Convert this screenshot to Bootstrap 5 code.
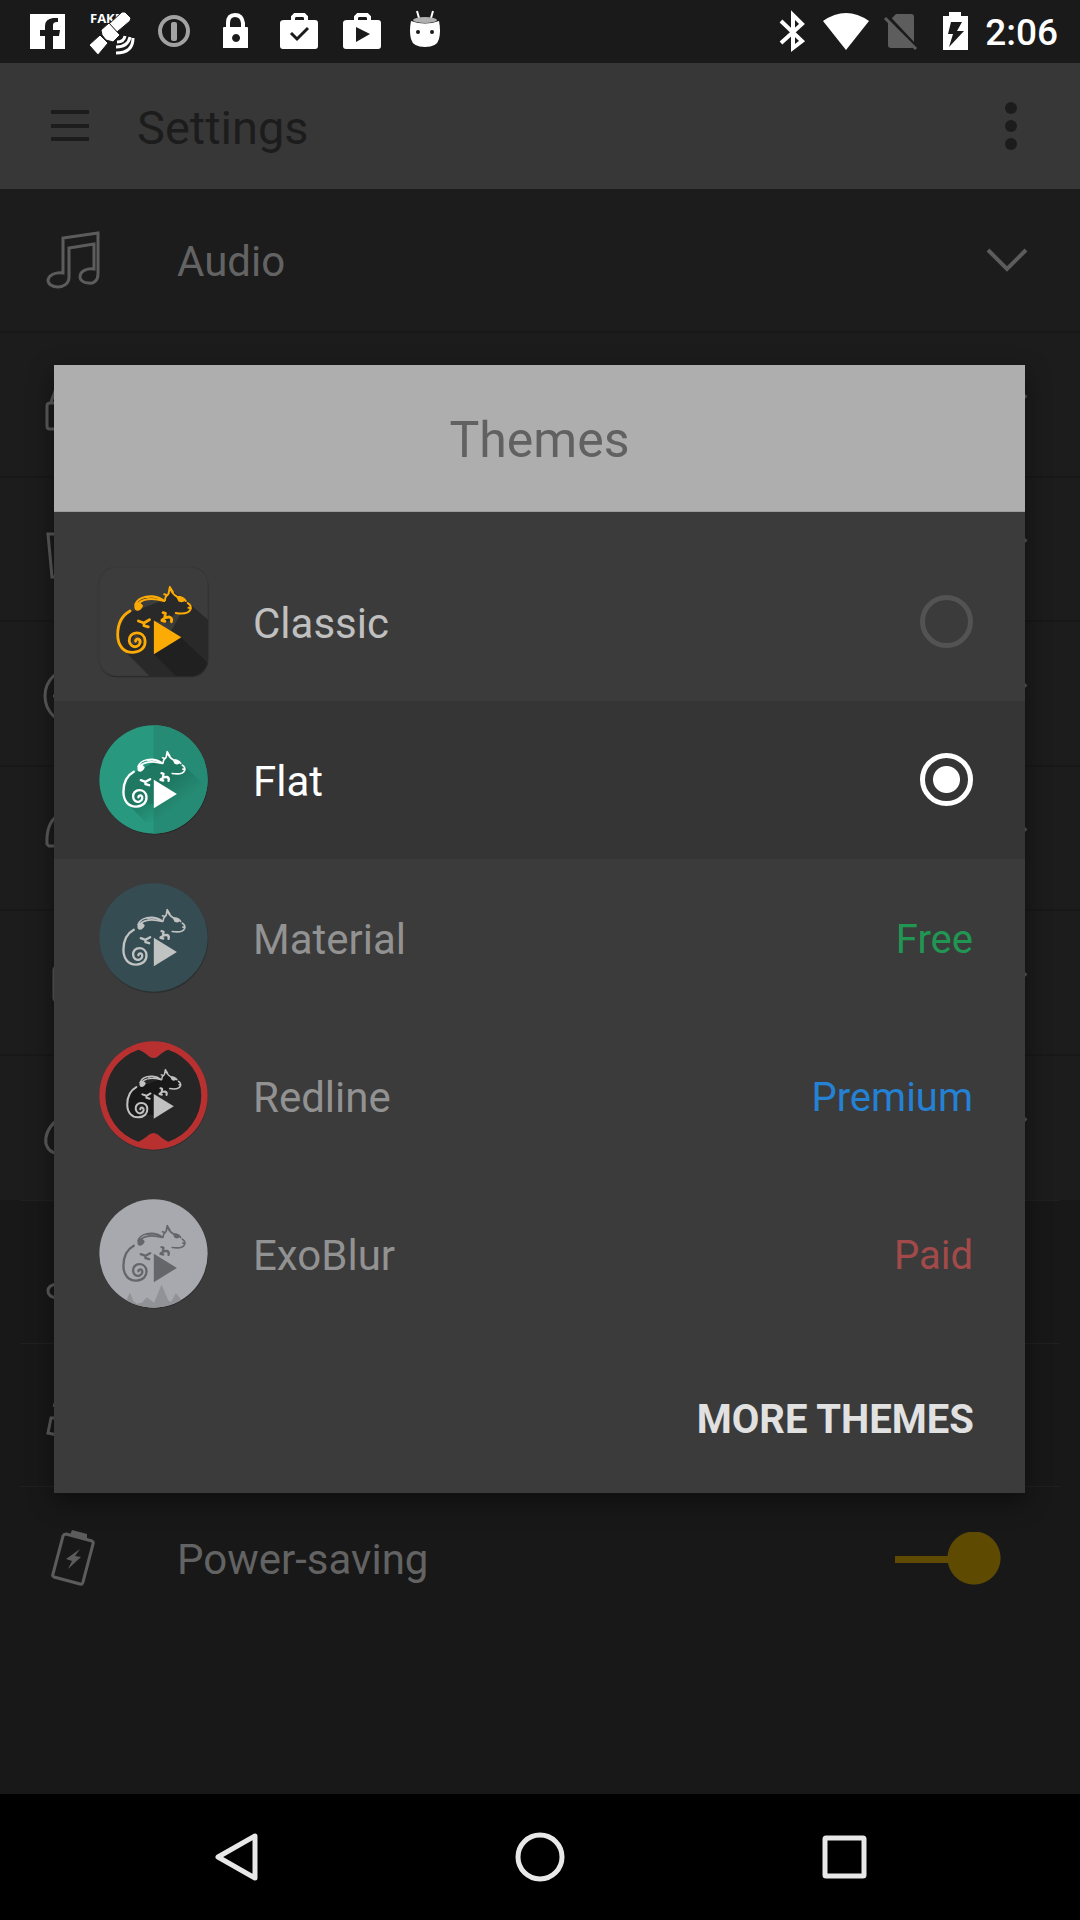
<!DOCTYPE html>
<html lang="en">
<head>
<meta charset="utf-8">
<meta name="viewport" content="width=device-width, initial-scale=1">
<title>Settings</title>
<link rel="stylesheet" href="https://cdn.jsdelivr.net/npm/bootstrap@5.3.0/dist/css/bootstrap.min.css">
<style>
  body { font-family: Roboto, "Noto Sans", sans-serif; background: #181818; color: #636363; font-size: 42px; line-height: 48px; }
  svg { display: block; flex: none; overflow: visible; }
  button { color: inherit; }
  .statusbar { height: 63px; background: #1a1a1a; color: #fff; padding: 0 22px 0 24px; }
  .status-left { gap: 15px; }
  .status-right { gap: 6px; }
  .clock { font-size: 37px; font-weight: 500; padding-top: 3px; }
  .fake-tag { font: bold 13px "Open Sans", sans-serif; }
  .appbar { height: 126px; background: #373737; color: #1c1c1c; padding: 0 60px 0 50px; }
  .appbar h1 { font-size: 47px; line-height: 56px; margin: 0 0 0 47px; padding-top: 3px; }
  .icon-btn { background: none; border: 0; padding: 0; }
  .setting { height: 144px; background: #1c1c1c; border-bottom: 2px solid #181818; padding: 0 52px 0 45px; gap: 72px; }
  .setting:nth-child(even) { height: 145px; }
  .setting span, .setting label, .theme-item span, .theme-item label { padding-top: 4px; }
  .basic .setting { height: 143px; background: none; border: 0; margin: 0 20px; padding: 0 59px 0 25px; border-top: 1px solid #202020; }
  .line-icon { width: 60px; height: 60px; fill: none; stroke: #5c5c5c; stroke-width: 3; }
  .chevron { width: 42px; height: 24px; fill: none; stroke: #5c5c5c; stroke-width: 4; }
  .power-switch { appearance: none; width: 106px; height: 53px; margin: 0;
    background: radial-gradient(circle at 79px 26px, #5e4a00 26px, transparent 27px), linear-gradient(#5e4a00, #5e4a00) 0 24px / 60px 7px no-repeat; }
  .overlay { padding: 0 55px 0 54px; }
  .dialog-box { background: #3b3b3b; box-shadow: 0 8px 24px rgba(0,0,0,.45); }
  .dialog-head { background: #aeaeae; color: #616161; border-bottom: 1px solid #9c9c9c; padding: 48px 0 44px; }
  .dialog-head h2 { font-size: 50px; line-height: 54px; margin: 0; }
  .theme-list { padding-top: 31px; }
  .theme-item { height: 158px; padding: 0 52px 0 45px; gap: 45px; color: #929292; }
  .theme-item.available { color: #c0c0c0; }
  .theme-item.selected { background: #353535; color: #fff; }
  .theme-icon { width: 109px; height: 109px; }
  .theme-radio { appearance: none; width: 53px; height: 53px; margin: 0; border: 5px solid #535353; border-radius: 50%; }
  .theme-radio:checked { border-color: #fff; background: radial-gradient(circle, #fff 13px, transparent 14px); }
  .price { font-size: 40px; }
  .price-free { color: #219653; }
  .price-premium { color: #2481d3; }
  .price-paid { color: #a24a4a; }
  .dialog-foot { padding: 63px 51px 49px; }
  .more-btn { font-size: 40px; font-weight: 700; color: #e1e1e1; line-height: 48px; }
  .navbuttons { height: 126px; background: #000; gap: 224px; }
  .navbuttons svg { width: 80px; height: 80px; fill: none; stroke: #e8e8e8; stroke-width: 5; stroke-linejoin: round; }
</style>
<script src="https://cdn.jsdelivr.net/npm/bootstrap@5.3.0/dist/js/bootstrap.bundle.min.js"></script>
</head>
<body class="min-vh-100 d-flex flex-column">

<!-- shared drawings -->
<svg width="0" height="0" class="position-absolute" aria-hidden="true">
  <defs>
    <g id="chameleon">
      <g fill="none" stroke="currentColor" stroke-linecap="round" stroke-linejoin="round">
        <path stroke-width="7" d="M104 140C82 152 73 174 73 200C73 228 89 245 112 244C132 243 143 231 142 215C141 201 131 195 121 195C109 195 101 204 102 215C103 226 112 232 121 229C130 226 132 215 126 211C122 209 117 212 118 216"/>
        <path stroke-width="5" d="M117 124C122 109 140 102 160 103C174 104 183 109 190 115M127 119C142 108 168 109 190 115"/>
        <path stroke-width="4" d="M146 106Q166 100 187 113"/>
        <path stroke-width="5" d="M192 113C191 102 197 103 201 96L204 80Q208 96 222 104Q238 104 244 115M204 80L212 93M190 98L197 100"/>
        <path stroke-width="5" d="M249 120Q259 126 256 136Q250 150 219 145M251 132L257 133"/>
        <path stroke-width="7" d="M125 165L139 170L153 162M139 170L139 177L150 180M187 144L193 146L191 158L184 163M191 157L203 155Q211 158 208 167M184 164L192 166"/>
      </g>
      <path fill="currentColor" d="M115 132C114 121 122 115 130 120L137 126C133 140 117 145 115 132ZM220 104Q232 101 243 113Q236 121 226 116Z"/>
      <path fill="currentColor" d="M164 164L233 206L164 249Z"/>
    </g>
    <path id="chameleon-body" d="M106 142L130 135L190 112L205 85L252 122L252 142L218 145L196 170L165 165L164 236L137 234L139 212L117 197L105 222L117 226L112 242C66 242 66 170 106 142Z"/>
    <linearGradient id="fade" gradientUnits="userSpaceOnUse" x1="150" y1="180" x2="210" y2="260"><stop offset="0" stop-color="#14604c" stop-opacity=".6"/><stop offset="1" stop-color="#14604c" stop-opacity="0"/></linearGradient>
    <clipPath id="tile"><rect width="326" height="326" rx="52"/></clipPath>
    <clipPath id="disc"><circle cx="163" cy="163" r="162"/></clipPath>
    <symbol id="chev" viewBox="0 0 42 24"><path d="M2 2L21 21L40 2"/></symbol>
  </defs>
</svg>

<header class="statusbar d-flex align-items-center justify-content-between">
  <div class="status-left d-flex">
    <svg width="48" height="63" fill="#fff"><path d="M6 14h35v35H29V36h6l1-6h-7v-5q0-3 4-3h1v-4h-5q-8 1-8 8v4h-5v6h5v13H6z"/></svg>
    <svg width="48" height="63" fill="#fff"><text class="fake-tag" x="3" y="23">FAKE</text><g stroke="#1a1a1a" stroke-width="1"><path d="M35 12l3 0 6 6-1 3-13 11-8-8z"/><path d="M14 30l8-7 11 12-7 7-7-2-4-5z"/><path d="M13 35l8 8-10 12-9-10z"/></g><g fill="none" stroke="#fff" stroke-width="3"><path d="M30 42q7 0 8-6M29 47q12 0 14-10M29 53q17 0 17-15"/></g></svg>
    <svg width="48" height="63"><circle cx="24" cy="31" r="14" fill="none" stroke="#a2a2a2" stroke-width="4"/><rect x="21" y="22" width="6" height="19" rx="2" fill="#a2a2a2"/></svg>
    <svg width="48" height="63"><path d="M15 28v-5q0-8 7-8t8 8v5" fill="none" stroke="#fff" stroke-width="4"/><path fill="#fff" fill-rule="evenodd" d="M11 27h23q1 0 1 1v20H10V28q0-1 1-1zm12 7a4 4 0 1 0 .1 0z"/></svg>
    <svg width="48" height="63"><path fill="#fff" d="M8 20h31q3 0 3 3v23q0 3-3 3H7q-3 0-3-3V23q0-3 4-3z"/><path d="M17 21v-4l2-2h9l2 2v4" fill="none" stroke="#fff" stroke-width="4"/><path d="M15 33l6 6 11-11" fill="none" stroke="#1a1a1a" stroke-width="3"/></svg>
    <svg width="48" height="63"><path fill="#fff" d="M8 20h31q3 0 3 3v23q0 3-3 3H7q-3 0-3-3V23q0-3 4-3z"/><path d="M17 21v-4l2-2h9l2 2v4" fill="none" stroke="#fff" stroke-width="4"/><path fill="#1a1a1a" d="M17 27l14 7-14 8z"/></svg>
    <svg width="48" height="63"><path d="M15 11l2 7M31 11l-2 7" stroke="#fff" stroke-width="2"/><path fill="#fff" d="M9 21q14 5 28 0 2 10 0 18-2 8-14 8T9 39q-2-8 0-18z"/><ellipse cx="23" cy="20" rx="12" ry="3" fill="#b0b0b0"/><circle cx="16" cy="32" r="2" fill="#1a1a1a"/><circle cx="30" cy="32" r="2" fill="#1a1a1a"/></svg>
  </div>
  <div class="status-right d-flex align-items-center">
    <svg width="48" height="63" fill="none" stroke="#fff" stroke-width="4"><path d="M12 21l21 20-9 7V15l9 9-21 19"/></svg>
    <svg width="48" height="63" fill="#fff"><path d="M0 21Q23 5 46 21L23 50z"/></svg>
    <svg width="48" height="63"><path fill="#5d5d5d" d="M19 14h15q3 0 3 3v28q0 3-3 3H14q-3 0-3-3V22z"/><path d="M11 17l30 32" stroke="#1a1a1a" stroke-width="4"/><path d="M8 18l31 31" stroke="#5d5d5d" stroke-width="3"/></svg>
    <svg width="48" height="63"><path fill="#fff" d="M12 16h6v-4h12v4h7v34H12z"/><path fill="#1a1a1a" d="M20 22h11l-5 9h7L18 47l4-13h-5z"/></svg>
    <time class="clock">2:06</time>
  </div>
</header>

<div class="position-relative flex-grow-1">
  <nav class="appbar d-flex align-items-center">
    <button class="icon-btn" type="button"><svg width="40" height="40" stroke="#1c1c1c" stroke-width="4"><path d="M1 6h38M1 20h38M1 33h38"/></svg></button>
    <h1 class="fw-normal">Settings</h1>
    <button class="icon-btn ms-auto" type="button"><svg width="18" height="54" fill="#1c1c1c"><circle cx="9" cy="9" r="6"/><circle cx="9" cy="27" r="6"/><circle cx="9" cy="45" r="6"/></svg></button>
  </nav>

  <main>
    <div class="expandable">
      <div class="setting d-flex align-items-center">
        <svg class="line-icon" stroke-width="2"><path d="M18 43V8L53 3V44C53 51 48 54 44 53C38 53 35 50 35 47C35 41 42 38 49 39V14L24 18V47C24 54 18 57 13 57C7 57 3 54 3 50C4 45 10 42 18 43Z"/></svg>
        <span>Audio</span><svg class="chevron ms-auto"><use href="#chev"/></svg>
      </div>
      <div class="setting d-flex align-items-center"><svg class="line-icon"><path d="M12 54H5q-3 0-3-3V31q0-3 3-3h7M6 27l6-16"/></svg><svg class="chevron ms-auto"><use href="#chev"/></svg></div>
      <div class="setting d-flex align-items-center"><svg class="line-icon"><path d="M12 15H3L7 58h6"/></svg><svg class="chevron ms-auto"><use href="#chev"/></svg></div>
      <div class="setting d-flex align-items-center"><svg class="line-icon"><circle cx="28" cy="32" r="28"/><path d="M8 32h12"/></svg><svg class="chevron ms-auto"><use href="#chev"/></svg></div>
      <div class="setting d-flex align-items-center"><svg class="line-icon"><path d="M12 8Q1 16 2 36l2 2h8"/></svg><svg class="chevron ms-auto"><use href="#chev"/></svg></div>
      <div class="setting d-flex align-items-center"><svg class="line-icon"><rect x="9" y="14" width="30" height="34" rx="3"/></svg><svg class="chevron ms-auto"><use href="#chev"/></svg></div>
      <div class="setting d-flex align-items-center border-0"><svg class="line-icon"><path d="M12 22Q-1 33 1 46q3 9 11 9M9 47h3"/></svg><svg class="chevron ms-auto"><use href="#chev"/></svg></div>
    </div>
    <div class="basic">
      <div class="setting d-flex align-items-center"><svg class="line-icon"><path d="M12 42q-9 1-9 7t9 7"/></svg></div>
      <div class="setting d-flex align-items-center"><svg class="line-icon"><path d="M12 33H6L3 48l9 2M12 12l-3 10"/></svg></div>
      <div class="setting d-flex align-items-center">
        <svg class="line-icon"><path d="M21 6L47 13q2 1 1 3L38 54q-1 3-3 2L9 49q-2-1-1-3L18 8q1-2 3-2Z"/><path fill="#5c5c5c" stroke="none" d="M27 2l15 4v6l-17-5zM35 21L21 31l6 2-4 8 13-12-6-1z"/></svg>
        <label for="power">Power-saving</label>
        <input class="power-switch ms-auto" type="checkbox" role="switch" id="power" checked>
      </div>
    </div>
  </main>

  <div class="overlay position-absolute top-0 start-0 w-100 h-100 d-flex align-items-center">
    <section class="dialog-box w-100" role="dialog" aria-labelledby="themes-title">
      <div class="dialog-head text-center"><h2 class="fw-normal" id="themes-title">Themes</h2></div>
      <div class="theme-list">
        <div class="theme-item available d-flex align-items-center">
          <svg class="theme-icon" viewBox="0 0 326 326">
            <rect x="1" y="4" width="326" height="326" rx="52" fill="#292929"/><rect x="-1" y="-1" width="328" height="328" rx="52" fill="#343434"/><rect x="1" y="1" width="324" height="324" rx="51" fill="#3c3c3c"/>
            <g clip-path="url(#tile)"><path fill="#292929" d="M60 235L160 335H340V170L264 105L200 220Z"/><path fill="#202020" d="M164 260L247 212L340 300V340H244Z"/></g>
            <g transform="translate(-31 -35) scale(1.190)" color="#fcab05"><use href="#chameleon-body" fill="#292929"/><use href="#chameleon"/></g>
          </svg>
          <label for="classic">Classic</label>
          <input class="theme-radio ms-auto" type="radio" name="theme" id="classic">
        </div>
        <div class="theme-item selected d-flex align-items-center">
          <svg class="theme-icon" viewBox="0 0 326 326">
            <circle cx="165" cy="166" r="162" fill="#292929"/><circle cx="163" cy="163" r="162" fill="#28997f"/><path fill="#268b74" d="M163 1A162 162 0 0 1 163 325Z"/>
            <g clip-path="url(#disc)" fill="url(#fade)"><path d="M78 228L140 292H280L310 260V175L255 122L204 90L110 140Z"/></g>
            <g color="#fff"><use href="#chameleon-body" fill="#1f7862"/><use href="#chameleon"/></g>
          </svg>
          <label for="flat">Flat</label>
          <input class="theme-radio ms-auto" type="radio" name="theme" id="flat" checked>
        </div>
        <div class="theme-item d-flex align-items-center">
          <svg class="theme-icon" viewBox="0 0 326 326">
            <circle cx="165" cy="167" r="162" fill="#2c3030"/><circle cx="163" cy="163" r="162" fill="#344c52"/><g color="#c1c2c2"><use href="#chameleon"/></g>
          </svg>
          <span>Material</span><span class="price price-free ms-auto">Free</span>
        </div>
        <div class="theme-item d-flex align-items-center">
          <svg class="theme-icon" viewBox="0 0 326 326">
            <circle cx="164" cy="166" r="162" fill="#303030"/><circle cx="163" cy="163" r="162" fill="#b93030"/>
            <path fill="#262626" d="M118 26Q128 28 150 46Q163 56 176 46Q197 28 207 26A145 145 0 0 1 207 301Q197 299 176 280Q163 270 150 280Q128 299 118 301A145 145 0 0 1 118 26Z"/>
            <g transform="translate(21 16) scale(.870)" color="#c1c1c1"><use href="#chameleon-body" fill="#181818"/><use href="#chameleon"/></g>
          </svg>
          <span>Redline</span><span class="price price-premium ms-auto">Premium</span>
        </div>
        <div class="theme-item d-flex align-items-center">
          <svg class="theme-icon" viewBox="0 0 326 326">
            <circle cx="165" cy="166" r="162" fill="#303030"/><circle cx="163" cy="163" r="162" fill="#a8a9ae"/>
            <path clip-path="url(#disc)" fill="#919296" d="M75 320L92 280L103 305L112 313L128 310L143 294L165 310L187 256L207 303L215 308L230 281L245 300V330H75Z"/>
            <g color="#65666a"><use href="#chameleon"/></g>
          </svg>
          <span>ExoBlur</span><span class="price price-paid ms-auto">Paid</span>
        </div>
      </div>
      <div class="dialog-foot d-flex justify-content-end"><button class="icon-btn more-btn" type="button">MORE THEMES</button></div>
    </section>
  </div>
</div>

<footer class="navbuttons d-flex align-items-center justify-content-center">
  <button class="icon-btn" type="button"><svg><path d="M59 19V61L22 40Z"/></svg></button>
  <button class="icon-btn" type="button"><svg><circle cx="40" cy="40" r="22"/></svg></button>
  <button class="icon-btn" type="button"><svg><rect x="21" y="21" width="39" height="38" rx="1"/></svg></button>
</footer>
</body>
</html>
